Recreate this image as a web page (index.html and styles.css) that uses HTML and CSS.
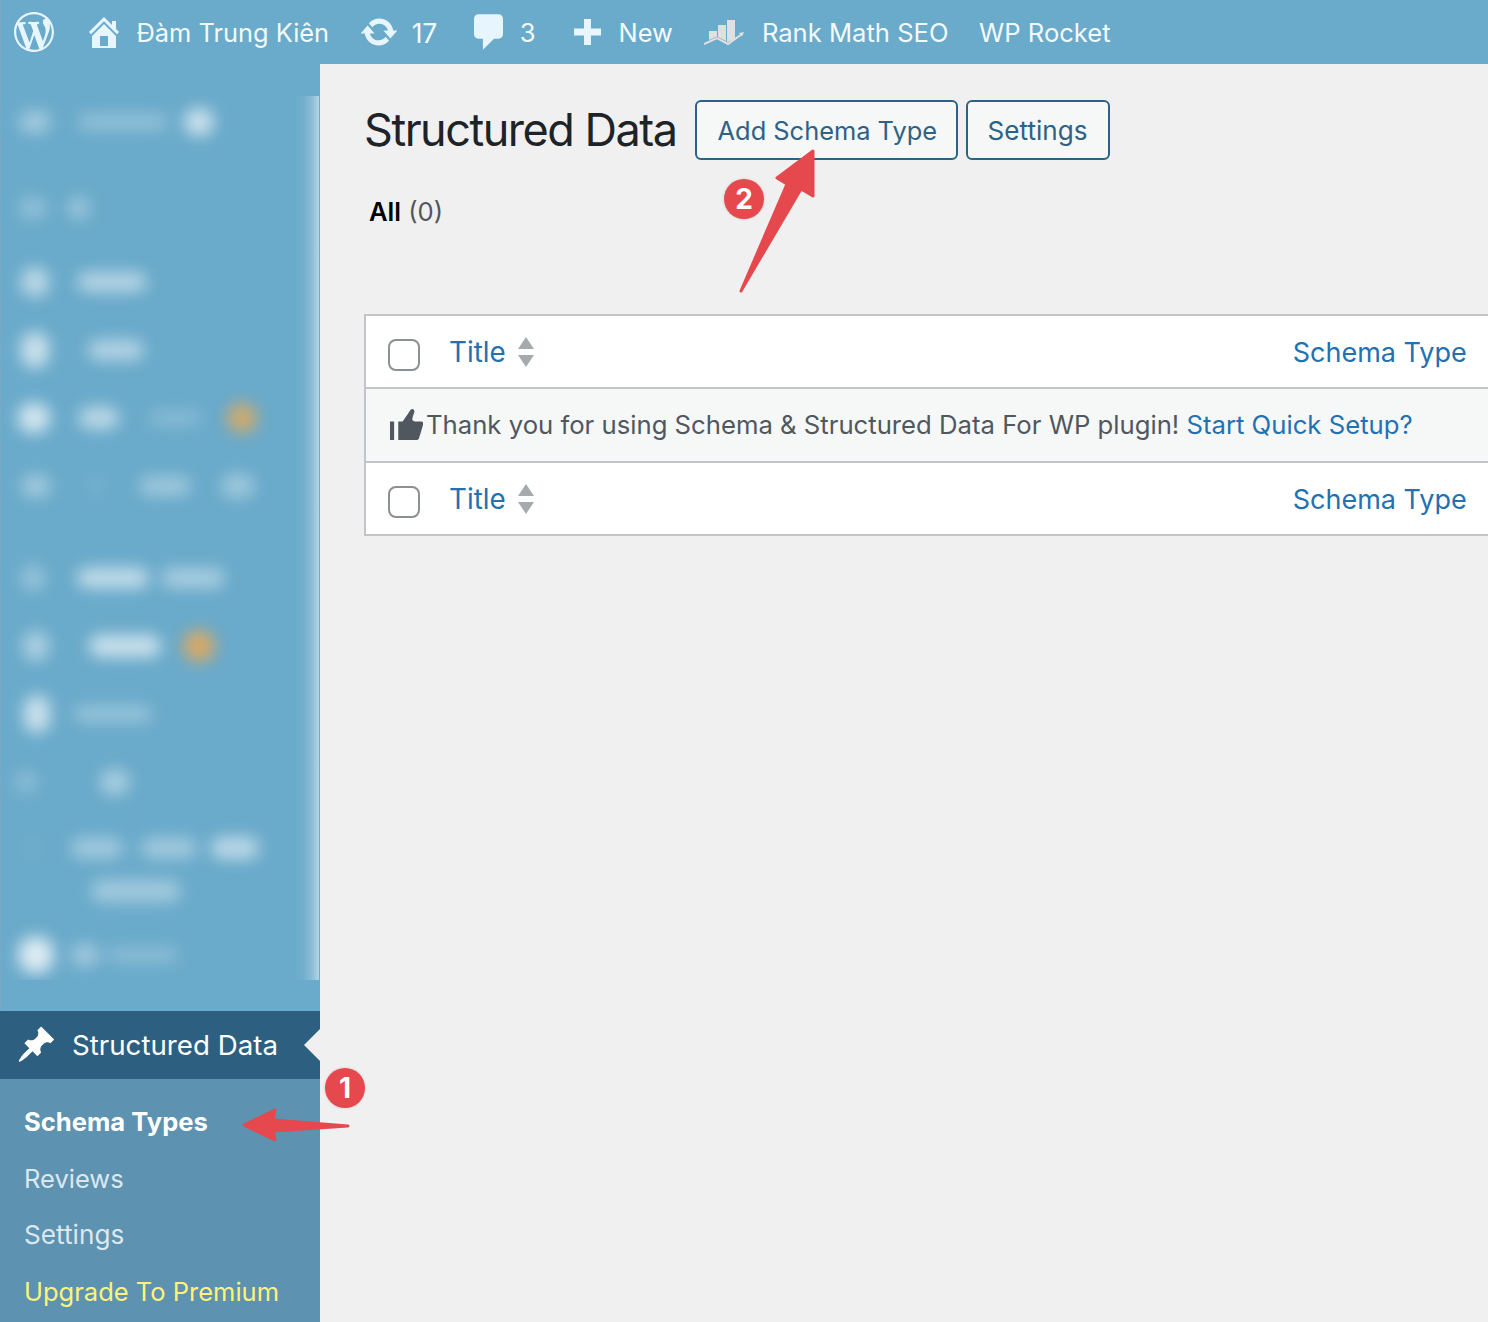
FILE: index.html
```html
<!DOCTYPE html>
<html lang="en">
<head>
<meta charset="utf-8">
<title>Structured Data</title>
<link rel="stylesheet" href="styles.css">
</head>
<body>
<header class="topbar">
  <svg class="ic ic-wp" viewBox="0 0 20 20"><path d="M20 10c0-5.51-4.49-10-10-10C4.48 0 0 4.49 0 10c0 5.52 4.48 10 10 10 5.51 0 10-4.48 10-10zM7.78 15.37L4.37 6.22c.55-.02 1.17-.08 1.17-.08.5-.06.44-1.13-.06-1.11 0 0-1.45.11-2.37.11-.18 0-.37 0-.58-.01C4.12 2.69 6.87 1.11 10 1.11c2.33 0 4.45.87 6.05 2.34-.68-.11-1.65.39-1.65 1.58 0 .74.45 1.36.9 2.1.35.61.55 1.36.55 2.46 0 1.49-1.4 5-1.4 5l-3.03-8.37c.54-.02.82-.17.82-.17.5-.05.44-1.25-.06-1.22 0 0-1.44.12-2.38.12-.87 0-2.33-.12-2.33-.12-.5-.03-.56 1.2-.06 1.22l.92.08 1.26 3.41zM17.41 10c.24-.64.74-1.87.43-4.25.7 1.29 1.05 2.71 1.05 4.25 0 3.29-1.73 6.24-4.4 7.78.97-2.59 1.94-5.2 2.92-7.78zM6.1 18.09C3.12 16.65 1.11 13.53 1.11 10c0-1.3.23-2.48.72-3.59C3.25 10.3 4.67 14.2 6.1 18.09zm4.03-6.63l2.58 6.98c-.86.29-1.76.45-2.71.45-.79 0-1.57-.11-2.29-.33.81-2.38 1.62-4.74 2.42-7.1z"/></svg>
  <svg class="ic ic-home" viewBox="0 0 20 20"><path d="M16 8.5l1.53 1.53-1.06 1.06L10 4.62l-6.47 6.47-1.06-1.06L10 2.5l4 4v-2h2v4zm-6-2.46l6 5.99V18H4v-5.97zM12 17v-5H8v5h4z"/></svg>
  <span class="bar-text t-site">Đàm Trung Kiên</span>
  <svg class="ic ic-upd" viewBox="0 0 20 20"><path d="M10.2 3.28c3.53 0 6.43 2.61 6.92 6h2.08l-3.5 4-3.5-4h2.32c-.45-1.97-2.21-3.45-4.32-3.45-1.45 0-2.73.71-3.54 1.78L4.95 5.66C6.23 4.2 8.11 3.28 10.2 3.28zm-.4 13.44c-3.52 0-6.43-2.61-6.92-6H.8l3.5-4c1.17 1.33 2.33 2.67 3.5 4H5.48c.45 1.97 2.21 3.45 4.32 3.45 1.45 0 2.73-.71 3.54-1.78l1.71 1.95c-1.28 1.46-3.15 2.38-5.25 2.38z"/></svg>
  <span class="bar-text t-17">17</span>
  <svg class="ic ic-com" viewBox="3 2 13 16"><path d="M5 2h9c1.1 0 2 .9 2 2v7c0 1.1-.9 2-2 2h-2l-5 5v-5H5c-1.1 0-2-.9-2-2V4c0-1.1.9-2 2-2z"/></svg>
  <span class="bar-text t-3">3</span>
  <svg class="ic ic-plus" viewBox="0 0 27 26"><path d="M10 0h7v9.500h10v7H17V26h-7v-9.500H0v-7h10z"/></svg>
  <span class="bar-text t-new">New</span>
  <svg class="ic-rank" viewBox="0 0 40 28"><path d="M5 13h8v5.500l-8 3.500zM14 7h8v16l-8-4zM23 2h8v19l-8 3.500z"/><path class="rank-line" d="M0 26l13-6 11 6 14-10"/><path d="M35 15l5-1-2 4.500z"/></svg>
  <span class="bar-text t-rank">Rank Math SEO</span>
  <span class="bar-text t-rocket">WP Rocket</span>
</header>

<div class="shell">
  <nav class="sidebar">
    <div class="blurred">
      <div class="row r-first"><span class="blob r1a"></span><span class="blob r1b"></span><span class="blob r1c"></span></div>
      <div class="row r-gap26"><span class="blob r2a"></span><span class="blob r2b"></span></div>
      <div class="row r-gap6"><span class="blob r3a"></span><span class="blob r3b"></span></div>
      <div class="row"><span class="blob r4a"></span><span class="blob r4b"></span></div>
      <div class="row"><span class="blob r5a"></span><span class="blob r5b"></span><span class="blob r5c"></span><span class="blob orange r5d"></span></div>
      <div class="row"><span class="blob r6a"></span><span class="blob r6b"></span><span class="blob r6c"></span><span class="blob r6d"></span></div>
      <div class="row r-gap24"><span class="blob r7a"></span><span class="blob r7b"></span><span class="blob r7c"></span></div>
      <div class="row"><span class="blob r8a"></span><span class="blob r8b"></span><span class="blob orange r8c"></span></div>
      <div class="row"><span class="blob r9a"></span><span class="blob r9b"></span></div>
      <div class="row"><span class="blob r10a"></span><span class="blob r10b"></span></div>
      <div class="row tight r-gap10"><span class="blob r11a"></span><span class="blob r11b"></span><span class="blob r11c"></span><span class="blob r11d"></span></div>
      <div class="row tight"><span class="blob r12a"></span></div>
      <div class="row r-gap9"><span class="blob r13a"></span><span class="blob r13b"></span><span class="blob r13c"></span></div>
      <div class="edge"></div>
    </div>
    <div class="active-item">
      <svg class="ic-pin" viewBox="0 0 20 20"><path d="M10.44 3.02l1.82-1.82 6.36 6.35-1.83 1.82c-1.05-.68-2.48-.57-3.41.36l-.75.75c-.92.93-1.04 2.35-.35 3.41l-1.83 1.82-2.41-2.41-2.8 2.79c-.42.42-3.38 2.71-3.8 2.29s1.86-3.39 2.28-3.81l2.79-2.79L4.1 9.36l1.83-1.82c1.05.69 2.48.57 3.41-.36l.75-.75c.93-.92 1.04-2.35.36-3.41z"/></svg>
      <span>Structured Data</span>
      <i class="notch"></i>
    </div>
    <ul class="submenu">
      <li class="current">Schema Types</li>
      <li>Reviews</li>
      <li class="sub-settings">Settings</li>
      <li class="premium">Upgrade To Premium</li>
    </ul>
  </nav>

  <main class="content">
    <div class="heading">
      <h1>Structured Data</h1>
      <a class="btn btn-add">Add Schema Type</a>
      <a class="btn btn-settings">Settings</a>
    </div>
    <p class="filter"><strong>All</strong> (0)</p>
    <div class="table">
      <div class="tr">
        <span class="check"></span>
        <a class="title-link">Title</a>
        <span class="sort"><i class="up"></i><i class="down"></i></span>
        <a class="schema-link">Schema Type</a>
      </div>
      <div class="tr tr-msg">
        <svg class="ic-thumb" viewBox="2 2 16 16"><path d="M12.72 2c.15-.02.26.02.41.07.56.19.83.79.66 1.35-.17.55-1 3.04-1 3.58 0 .53.75 1 1.35 1h3c.6 0 1 .4 1 1s-2 7-2 7c-.17.39-.55 1-1 1H6V8h2.140c.41-.41 3.300-4.710 3.580-5.270.210-.410.600-.680 1-.730zM2 8h2v9H2V8z"/></svg>
        <span class="msg">Thank you for using Schema &amp; Structured Data For WP plugin! <a class="setup">Start Quick Setup?</a></span>
      </div>
      <div class="tr">
        <span class="check"></span>
        <a class="title-link">Title</a>
        <span class="sort"><i class="up"></i><i class="down"></i></span>
        <a class="schema-link">Schema Type</a>
      </div>
    </div>
  </main>
</div>

<svg class="arrow arrow-two" viewBox="0 0 1488 1322"><polygon points="813,151 777,178 787,184 741,291 801,189 813,196"/></svg>
<svg class="arrow arrow-one" viewBox="0 0 1488 1322"><polygon points="244,1125 275,1110 273,1120 348,1126 273,1131 275,1140"/></svg>
<span class="badge badge-one">1</span>
<span class="badge badge-two">2</span>
</body>
</html>
```
FILE: styles.css
```css
* { box-sizing: border-box; }
html, body { margin: 0; padding: 0; height: 1322px; overflow: hidden; }
body {
  position: relative;
  display: flex;
  flex-direction: column;
  background: #f0f0f1;
  color: #1d2327;
  font-family: Inter, "Liberation Sans", sans-serif;
}

/* top bar */
.topbar {
  flex: none;
  height: 64px;
  display: flex;
  align-items: center;
  background: #6aaaca;
  border-left: 1px solid #79a9c4;
}
.ic { fill: #e6f5fe; flex: none; }
.bar-text { flex: none; margin-top: 2px; font-size: 25.6px; color: #f3fafe; white-space: nowrap; line-height: 62px; }
.ic-wp { width: 40px; height: 40px; margin-left: 13px; }
.ic-home { width: 40px; height: 40px; margin-left: 30px; }
.t-site { margin-left: 12.500px; font-size: 25.400px; }
.ic-upd { width: 40px; height: 40px; margin-left: 30px; }
.t-17 { margin-left: 12.500px; font-size: 26.400px; }
.ic-com { width: 29px; height: 36px; margin-left: 36.500px; }
.t-3 { margin-left: 17px; }
.ic-plus { width: 27px; height: 26px; margin-left: 38px; }
.t-new { margin-left: 18px; font-size: 25.400px; }
.ic-rank { flex: none; width: 40px; height: 28px; margin-left: 31px; fill: #e0e0e0; }
.rank-line { fill: none; stroke: #e0e0e0; stroke-width: 2; }
.t-rank { margin-left: 18px; }
.t-rocket { margin-left: 30.500px; }

.shell { flex: 1; display: flex; min-height: 0; }

/* sidebar */
.sidebar {
  flex: none;
  width: 320px;
  display: flex;
  flex-direction: column;
  background: #6aaaca;
  border-left: 1px solid #79a9c4;
}
.blurred {
  position: relative;
  flex: none;
  height: 884px;
  margin-top: 32px;
  margin-left: 1px;
  overflow: hidden;
  background: #6aaaca;
}
.edge {
  position: absolute;
  top: 0;
  right: 1px;
  width: 26px;
  height: 100%;
  background: linear-gradient(to right, rgba(255,255,255,0), rgba(255,255,255,.06) 40%, rgba(255,255,255,.2) 70%, rgba(255,255,255,.5));
}
.row { display: flex; align-items: center; height: 68px; }
.r-first { height: 52px; }
.tight { height: 43px; }
.r-gap26 { margin-top: 26px; }
.r-gap6 { margin-top: 6px; }
.r-gap24 { margin-top: 24px; }
.r-gap10 { margin-top: 10px; }
.r-gap9 { margin-top: 9px; }
.blob { flex: none; display: block; background: #fff; border-radius: 14px; filter: blur(8px); }
.orange { background: #e5a95a; border-radius: 50%; }

.r1a { width: 32px; height: 22px; margin-left: 17px; opacity: .38; }
.r1b { width: 90px; height: 16px; margin-left: 27px; opacity: .28; }
.r1c { width: 30px; height: 28px; margin-left: 16px; opacity: .65; }
.r2a { width: 28px; height: 20px; margin-left: 17px; opacity: .28; }
.r2b { width: 22px; height: 22px; margin-left: 21px; opacity: .34; }
.r3a { width: 28px; height: 30px; margin-left: 19px; opacity: .55; }
.r3b { width: 70px; height: 20px; margin-left: 28px; opacity: .5; }
.r4a { width: 28px; height: 36px; margin-left: 19px; opacity: .65; }
.r4b { width: 56px; height: 20px; margin-left: 39px; opacity: .5; }
.r5a { width: 32px; height: 30px; margin-left: 16px; opacity: .7; }
.r5b { width: 40px; height: 22px; margin-left: 29px; opacity: .55; }
.r5c { width: 52px; height: 16px; margin-left: 30px; opacity: .2; }
.r5d { width: 30px; height: 30px; margin-left: 26px; opacity: .85; }
.r6a { width: 30px; height: 22px; margin-left: 19px; opacity: .38; }
.r6b { width: 18px; height: 16px; margin-left: 36px; opacity: .1; }
.r6c { width: 52px; height: 20px; margin-left: 34px; opacity: .35; }
.r6d { width: 34px; height: 24px; margin-left: 30px; opacity: .35; }
.r7a { width: 24px; height: 26px; margin-left: 19px; opacity: .3; }
.r7b { width: 72px; height: 20px; margin-left: 32px; opacity: .6; }
.r7c { width: 64px; height: 20px; margin-left: 12px; opacity: .42; }
.r8a { width: 26px; height: 30px; margin-left: 21px; opacity: .45; }
.r8b { width: 72px; height: 22px; margin-left: 40px; opacity: .65; }
.r8c { width: 32px; height: 32px; margin-left: 22px; opacity: .9; }
.r9a { width: 26px; height: 38px; margin-left: 22px; opacity: .65; }
.r9b { width: 78px; height: 16px; margin-left: 24px; opacity: .32; }
.r10a { width: 24px; height: 22px; margin-left: 12px; opacity: .22; }
.r10b { width: 30px; height: 26px; margin-left: 62px; opacity: .42; }
.r11a { width: 26px; height: 22px; margin-left: 17px; opacity: .04; }
.r11b { width: 52px; height: 20px; margin-left: 26px; opacity: .38; }
.r11c { width: 56px; height: 20px; margin-left: 18px; opacity: .38; }
.r11d { width: 48px; height: 22px; margin-left: 14px; opacity: .55; }
.r12a { width: 90px; height: 22px; margin-left: 89px; opacity: .38; }
.r13a { width: 34px; height: 36px; margin-left: 17px; opacity: .78; }
.r13b { width: 28px; height: 22px; margin-left: 18px; opacity: .38; }
.r13c { width: 72px; height: 16px; margin-left: 8px; opacity: .22; }

.active-item {
  position: relative;
  flex: none;
  display: flex;
  align-items: center;
  height: 68px;
  margin-top: 31px;
  margin-left: -1px;
  padding-left: 72px;
  background: #2c5f80;
  color: #fff;
  font-size: 27.700px;
}
.ic-pin { position: absolute; left: 16px; top: 13px; width: 41px; height: 41px; fill: #fff; }
.notch {
  position: absolute;
  right: 0;
  top: 18px;
  width: 0;
  height: 0;
  border-style: solid;
  border-width: 16px 16px 16px 0;
  border-color: transparent #f0f0f1 transparent transparent;
}
.submenu {
  flex: 1;
  list-style: none;
  margin: 0 0 0 -1px;
  padding: 15px 0 0 24px;
  background: #5d92b0;
  font-size: 25.500px;
}
.submenu li { height: 56.500px; line-height: 56.500px; color: #dce8f0; white-space: nowrap; }
.submenu .current { color: #fff; font-weight: 700; font-size: 25.600px; }
.submenu .sub-settings { font-size: 26.200px; }
.submenu .premium { color: #fdf27a; }

/* main */
.content { flex: 1; min-width: 0; overflow: hidden; padding: 36px 0 0 44px; }
.heading { display: flex; align-items: center; height: 60px; }
h1 { margin: 0 18px 0 0; font-size: 45px; font-weight: 400; letter-spacing: -1.480px; line-height: 60px; color: #1d2327; white-space: nowrap; }
.btn {
  display: flex;
  align-items: center;
  height: 60px;
  margin-right: 8px;
  border: 2px solid #2c6285;
  border-radius: 6px;
  background: #f6f7f7;
  color: #2c6285;
  white-space: nowrap;
}
.btn-add { width: 263px; padding-left: 21px; font-size: 25.400px; }
.btn-settings { width: 144px; padding-left: 20px; font-size: 26.100px; }
.filter { margin: 34px 0 0 5px; height: 36px; line-height: 36px; font-size: 25.600px; color: #50575e; }
.filter strong { color: #000; font-weight: 600; }
.table {
  width: 1140px;
  margin-top: 84px;
  background: #fff;
  border: 2px solid #c3c4c7;
}
.tr { display: flex; align-items: center; height: 71px; padding-left: 22px; }
.tr-msg {
  height: 76px;
  border-top: 2px solid #c3c4c7;
  border-bottom: 2px solid #c3c4c7;
  background: #f6f7f7;
  color: #50575e;
  font-size: 25.700px;
}
.msg { margin-bottom: 2px; }
.check { flex: none; width: 32px; height: 32px; margin-top: 7px; border: 2px solid #8c8f94; border-radius: 8px; background: #fff; }
.title-link { margin-left: 29px; color: #2271b1; font-size: 27.800px; }
.sort { display: flex; flex-direction: column; gap: 6px; margin-left: 12px; }
.sort i { display: block; width: 0; height: 0; border-style: solid; border-color: transparent; }
.sort .up { border-width: 0 8px 12px; border-bottom-color: #a7aaad; }
.sort .down { border-width: 12px 8px 0; border-top-color: #a7aaad; }
.schema-link { margin-left: 759px; margin-top: 1px; color: #2271b1; font-size: 27px; white-space: nowrap; }
.ic-thumb { flex: none; width: 33px; height: 33px; margin-left: 2px; margin-right: 3px; fill: #50575e; }
.setup { color: #2271b1; }

/* annotations */
.arrow { position: absolute; left: 0; top: 0; width: 1488px; height: 1322px; pointer-events: none; }
.arrow polygon { fill: #e5484d; stroke: #e5484d; stroke-width: 3; stroke-linejoin: round; }
.badge {
  position: absolute;
  width: 40px;
  height: 40px;
  border-radius: 50%;
  background: #e5484d;
  color: #fff;
  font-size: 28px;
  font-weight: 700;
  line-height: 40px;
  text-align: center;
  box-shadow: 0 0 3px rgba(0,0,0,.15);
}
.badge-one { left: 325px; top: 1068px; }
.badge-two { left: 724px; top: 179px; }
```
